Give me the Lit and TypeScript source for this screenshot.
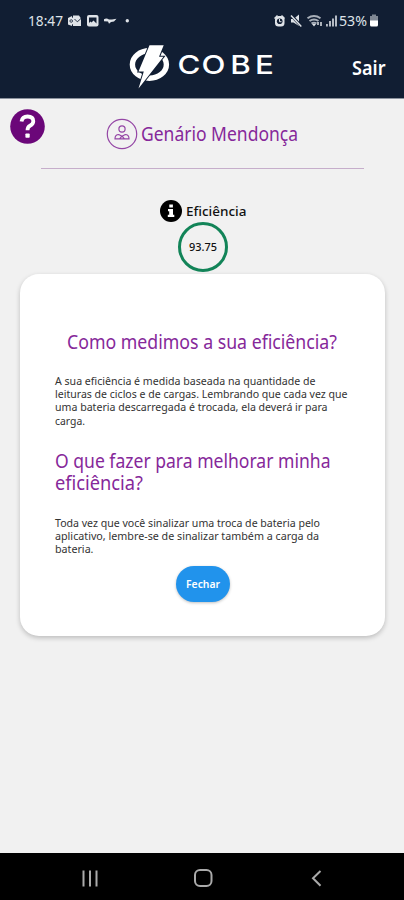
import { LitElement, html, svg, css } from "lit";
import { customElement, property } from "lit/decorators.js";

/** A single line of text set to a fixed measure. */
@customElement("fit-line")
class FitLine extends LitElement {
  @property() text = "";
  @property({ type: Number }) measure = 100;
  @property({ type: Number }) size = 11;
  @property({ type: Number }) leading = 13;

  static styles = css`
    :host { display: block; }
    svg { display: block; overflow: visible; }
    text { fill: currentColor; }
  `;

  render() {
    return html`<svg width=${this.measure} height=${this.leading}>
      ${svg`<text x="0" y=${this.leading * 0.5 + this.size * 0.36} font-size=${this.size}
        textLength=${this.measure} lengthAdjust="spacingAndGlyphs">${this.text}</text>`}
    </svg>`;
  }
}

type Line = [string, number];

const HOW: Line[] = [
  ["A sua eficiência é medida baseada na quantidade de", 260.5],
  ["leituras de ciclos e de cargas. Lembrando que cada vez que", 292.5],
  ["uma bateria descarregada é trocada, ela deverá ir para", 272.5],
  ["carga.", 30],
];
const IMPROVE_TITLE: Line[] = [
  ["O que fazer para melhorar minha", 275.5],
  ["eficiência?", 88],
];
const IMPROVE: Line[] = [
  ["Toda vez que você sinalizar uma troca de bateria pelo", 265],
  ["aplicativo, lembre-se de sinalizar também a carga da", 264],
  ["bateria.", 38.5],
];

@customElement("app-root")
class AppRoot extends LitElement {
  static styles = css`
    :host {
      display: flex;
      flex-direction: column;
      width: 404px;
      height: 900px;
      overflow: hidden;
      background: #f1f1f1;
      font-family: "Noto Sans", sans-serif;
      color: #111;
    }
    svg { display: block; flex: none; }
    header { height: 99px; flex: none; background: #111e33; color: #fff; border-bottom: 1px solid #8b929d; box-sizing: border-box; }
    .status { display: flex; justify-content: space-between; height: 40px; padding: 1px 25px 0 28px; box-sizing: border-box; align-items: center; color: #dfe3e8; }
    .side { display: flex; align-items: center; }
    .bar { display: grid; grid-template-columns: 129px 148px 1fr; height: 57px; }
    .exit { padding: 17px 0 0 75px; font-weight: 600; }
    main { flex: 1; display: flex; flex-direction: column; align-items: center; }
    .user { width: 100%; height: 69px; display: grid; grid-template-columns: 106px 35px 1fr; box-sizing: border-box; }
    .help { padding: 10px 0 0 10px; }
    .avatar { padding-top: 19px; }
    .name { padding-top: 24px; color: #86289a; }
    .rule { width: 323px; height: 1px; background: #c6aecb; }
    .eff { display: flex; gap: 4px; align-items: center; margin-top: 30px; height: 24px; padding-left: 3px; font-weight: 500; }
    .ring { width: 50px; height: 50px; margin: -1px 0 0 1px; border: 3px solid #128458; border-radius: 50%; box-sizing: border-box; display: grid; place-items: center; font-weight: 500; }
    .card { width: 365px; height: 362px; margin: 2px 0 0 1px; box-sizing: border-box; padding: 55px 34px 0 35px; background: #fff; border-radius: 19px; box-shadow: 0 2px 5px rgba(0,0,0,.22); display: flex; flex-direction: column; }
    .title { color: #86289a; }
    .first { margin-left: 12px; }
    .copy { color: #333; }
    .how { margin-top: 20px; }
    .second { margin-top: 23px; }
    .improve { margin-top: 22px; }
    .close { margin: 11px 0 0 121px; width: 54px; height: 36px; padding: 0; border: 0; border-radius: 18px; background: #2193ec; color: #fff; font: 600 11px "Noto Sans", sans-serif; display: grid; place-items: center; box-shadow: 0 1px 3px rgba(0,0,0,.25); }
    nav { height: 47px; flex: none; background: #000; }
  `;

  private lines(rows: Line[], size: number, leading: number) {
    return rows.map(([text, width]) => html`<fit-line .text=${text} .measure=${width} .size=${size} .leading=${leading}></fit-line>`);
  }

  render() {
    return html`
      <header>
        <div class="status">
          <div class="side">
            <fit-line text="18:47" measure="35" size="14" leading="16"></fit-line>
            <svg width="68" height="16" viewBox="63 13 68 16" fill="#dfe3e8">
              <path d="M68 18l4-2v10l-4-1.500z"/><circle cx="71.500" cy="21" r="3.500"/>
              <path d="M73 15.500h6l2 3V26h-8z"/>
              <path d="M74.500 19l2.800 2.800L81 18.500" fill="none" stroke="#111e33" stroke-width=".9"/>
              <circle cx="71.200" cy="21" r="1.300" fill="none" stroke="#111e33" stroke-width=".8"/>
              <rect x="87" y="15" width="11.500" height="11.500" rx="2"/>
              <path d="M89 17.500h7.500v6L93.500 20.500l-2 2-1-1-1.500 1.500z" fill="#111e33"/>
              <path d="M104 19.300q2.500-1.500 5 .3h3l4.500-.8-2.500 2.700-3 .5-2 1.800-1-2.300-4-.3z"/>
              <circle cx="127.300" cy="20.800" r="1.700"/>
            </svg>
          </div>
          <div class="side">
            <svg width="66" height="16" viewBox="273 13 66 16" fill="#dfe3e8">
              <path d="M274 18l3-3 1 1-3 3zM282 15l3 3-1 1-3-3z"/><rect x="275" y="16" width="9.500" height="10.500" rx="3.500"/>
              <circle cx="279.700" cy="21.200" r="2.800" fill="#111e33"/><path d="M279.500 19v2.700h2" fill="none" stroke="#dfe3e8"/>
              <path d="M291 19h2.500l5.500-4.500v11.500l-5.500-3.500H291z"/>
              <path d="M290.500 14.500l11 12" stroke="#111e33" stroke-width="3"/>
              <path d="M291 15.500l10.300 11" stroke="#dfe3e8" stroke-width="1.500"/>
              <g fill="none" stroke="#a8afb9" stroke-width="2"><path d="M307.500 18.300q6.500-4.500 13 0M309.500 21q4.500-3.200 9 0M311.500 23.500q2.500-1.700 5 0"/></g>
              <path d="M312 24l2 2.500 2-2.500z"/><path d="M318 25v-3M321 22v4" stroke="#dfe3e8" stroke-width="1.500"/>
              <path d="M326 24h1.900v2.500H326zM329 21h2v5.500h-2zM332 18.500h2v8h-2zM335 15.500h2v11h-2z" fill="#b4bac3"/>
            </svg>
            <fit-line text="53%" measure="28" size="14" leading="16"></fit-line>
            <svg width="12" height="16" viewBox="367 13 12 16"><path d="M372 14.500h4V16h2v5h-8v-5h2z" fill="#7f8793"/><path d="M370 20.500h8V25q0 1.500-1.500 1.500h-5Q370 26.500 370 25z" fill="#fff"/></svg>
          </div>
        </div>
        <div class="bar">
          <span></span>
          <svg width="148" height="57" viewBox="129 40 148 57">
            <ellipse cx="149.400" cy="64.500" rx="17" ry="13.700" fill="none" stroke="#fff" stroke-width="5.400"/>
            <path d="M149.500 45.300h14.200l-4.700 11.500h4.500L138.500 88.500l5.300-17h-5.300z" fill="#fff" stroke="#111e33" stroke-width="2" paint-order="stroke"/>
            <text transform="scale(1.200 1)" x="147.900 168 191.800 212.500" y="74" font-family="Inter, sans-serif" font-size="26" font-weight="500" fill="#fff">COBE</text>
          </svg>
          <fit-line class="exit" text="Sair" measure="33.500" size="19" leading="22"></fit-line>
        </div>
      </header>
      <main>
        <div class="user">
          <svg class="help" width="35" height="35" viewBox="0 0 35 35">
            <circle cx="17.500" cy="17.500" r="17.300" fill="#6b0779"/>
            <path d="M11.500 12.500Q12.300 7.500 17.500 7.500 23.300 7.500 23.300 12.200 23.300 15 20 16.700 17.500 18 17.500 21.300" fill="none" stroke="#fff" stroke-width="3.800"/>
            <rect x="15.400" y="24.500" width="4.300" height="4.300" rx=".8" fill="#fff"/>
          </svg>
          <svg class="avatar" width="32" height="32" viewBox="0 0 32 32" fill="none" stroke="#9446a5" stroke-width="1.200">
            <circle cx="16" cy="16" r="14.700"/><circle cx="16" cy="11" r="3.100"/>
            <path d="M9 20.800q0-4.300 3.800-4.300l3.200 1.700 3.200-1.700q3.800 0 3.800 4.300zM13.500 20.800l2.500-2.600 2.500 2.600"/>
          </svg>
          <fit-line class="name" text="Genário Mendonça" measure="157" size="19.500" leading="22"></fit-line>
        </div>
        <div class="rule"></div>
        <div class="eff">
          <svg width="22" height="22" viewBox="0 0 22 22"><circle cx="11" cy="11" r="11"/><path d="M9.300 4.500h3.600v3H9.300zM8 9h5v5.800h1.300V17H7.800v-2.200h1.400v-3.600H8z" fill="#fff"/></svg>
          <fit-line text="Eficiência" measure="60.500" size="13.300" leading="20"></fit-line>
        </div>
        <div class="ring"><fit-line text="93.75" measure="28" size="10.500" leading="14"></fit-line></div>
        <section class="card">
          <div class="title first">${this.lines([["Como medimos a sua eficiência?", 270]], 19.5, 25)}</div>
          <div class="copy how">${this.lines(HOW, 10.8, 13.2)}</div>
          <div class="title second">${this.lines(IMPROVE_TITLE, 19.5, 22)}</div>
          <div class="copy improve">${this.lines(IMPROVE, 10.8, 13.2)}</div>
          <button class="close"><fit-line text="Fechar" measure="34" size="11" leading="14"></fit-line></button>
        </section>
      </main>
      <nav>
        <svg width="404" height="47" viewBox="0 853 404 47" fill="none" stroke="#aaa" stroke-width="2">
          <path d="M83.500 870.500v16M90 870.500v16M96.500 870.500v16"/>
          <rect x="195" y="870" width="16.500" height="16" rx="5"/>
          <path d="M320.500 871l-7.500 7.300 7.500 7.500"/>
        </svg>
      </nav>
    `;
  }
}
